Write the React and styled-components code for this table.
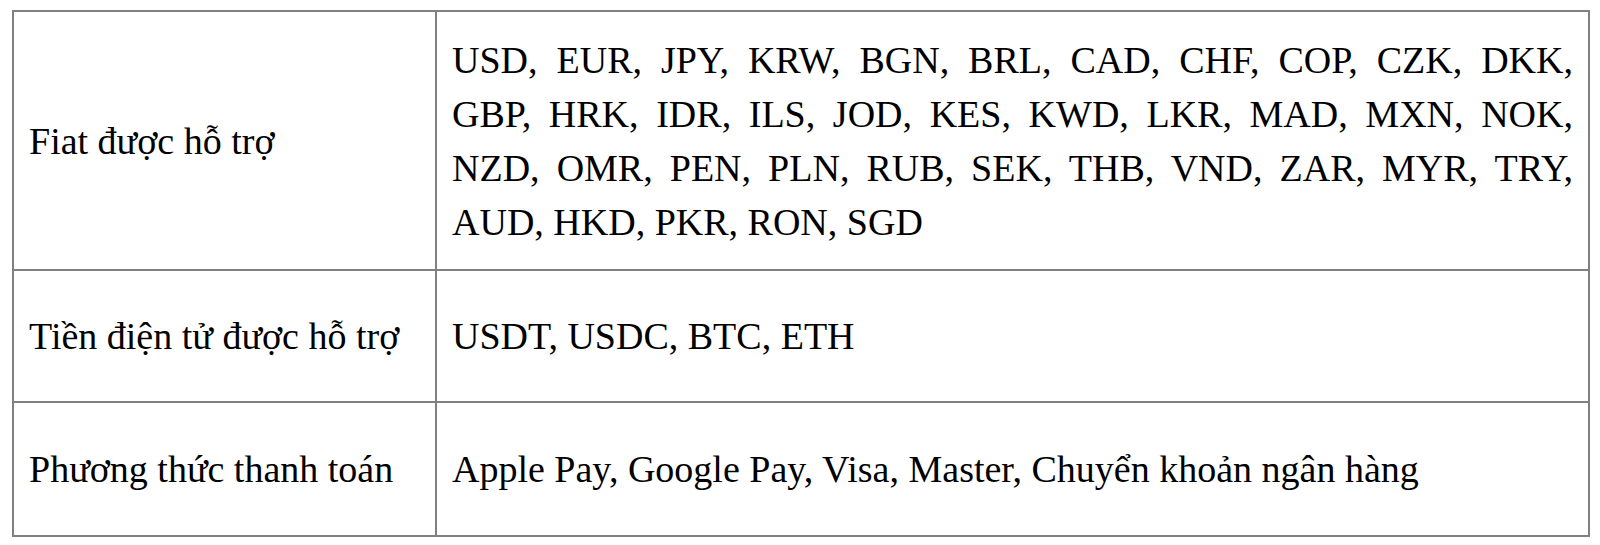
import React from 'react';
import styled, { createGlobalStyle } from 'styled-components';

const GlobalStyle = createGlobalStyle`
	html, body {
		margin: 0;
		padding: 0;
		background: #fff;
	}
	body {
		font-family: 'Liberation Serif', 'Times New Roman', serif;
		color: #000;
	}
`;

// lines are kept as in the source document so the justified wrap matches
const rows = [
	{
		label: 'Fiat được hỗ trợ',
		lines: [
			'USD, EUR, JPY, KRW, BGN, BRL, CAD, CHF, COP, CZK, DKK,',
			'GBP, HRK, IDR, ILS, JOD, KES, KWD, LKR, MAD, MXN, NOK,',
			'NZD, OMR, PEN, PLN, RUB, SEK, THB, VND, ZAR, MYR, TRY,',
			'AUD, HKD, PKR, RON, SGD',
		],
		height: 259,
	},
	{ label: 'Tiền điện tử được hỗ trợ', lines: ['USDT, USDC, BTC, ETH'], height: 132 },
	{
		label: 'Phương thức thanh toán',
		lines: ['Apple Pay, Google Pay, Visa, Master, Chuyển khoản ngân hàng'],
		height: 134,
	},
];

function App() {
	return (
		<>
			<GlobalStyle />
			<Page>
				<Table>
					<colgroup>
						<col width="423" />
						<col />
					</colgroup>
					<tbody>
						{rows.map(row => (
							<Row key={row.label} h={row.height}>
								<Label>{row.label}</Label>
								<Value>
									{row.lines.map((line, i) => (
										<Line key={i} last={i === row.lines.length - 1}>
											{line}
										</Line>
									))}
								</Value>
							</Row>
						))}
					</tbody>
				</Table>
			</Page>
		</>
	);
}

const Page = styled.div`
	padding: 10px 0 0 12px;
`;

const Table = styled.table`
	width: 1578px;
	table-layout: fixed;
	border-collapse: collapse;
	border: 2px solid #808080;
	font-family: 'Liberation Serif', 'Times New Roman', serif;
	font-size: 38px;
	line-height: 54px;
	color: #000;
`;

const Row = styled.tr`
	height: ${props => props.h}px;

	td {
		border: 2px solid #808080;
		vertical-align: middle;
	}
`;

const Label = styled.td`
	padding: 0 10px 0 15px;
	white-space: nowrap;
`;

const Value = styled.td`
	padding: 0 15px 0 15px;
`;

const Line = styled.div`
	white-space: nowrap;
	text-align: ${props => (props.last ? 'left' : 'justify')};
	text-align-last: ${props => (props.last ? 'left' : 'justify')};
`;

export default App;
